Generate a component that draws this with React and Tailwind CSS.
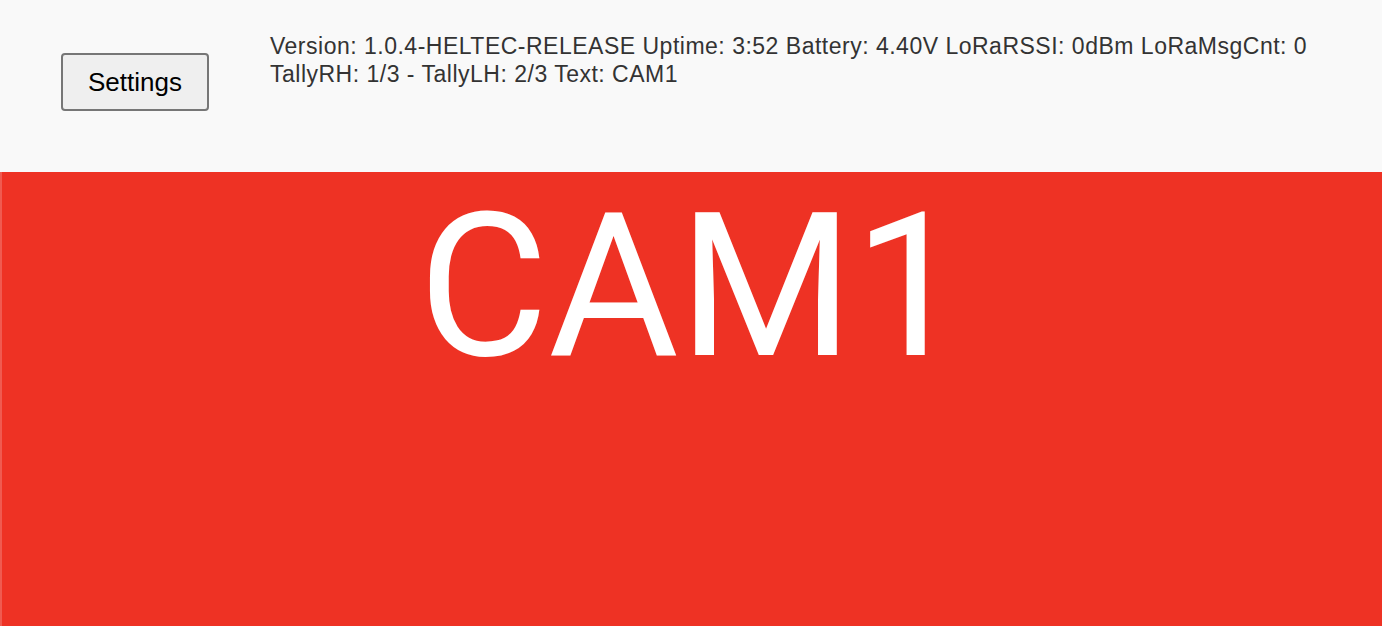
export default function App() {
  return (
    <div className="w-[1382px] h-[626px] flex flex-col bg-[#f9f9f9] overflow-hidden" style={{ fontFamily: '"Liberation Sans", Arial, sans-serif' }}>
      <div className="h-[172px] flex items-start shrink-0">
        <button className="mt-[53px] ml-[61px] w-[148px] h-[58px] border-2 border-[#767676] rounded-[4px] bg-[#efefef] text-[26px] text-black leading-none">
          Settings
        </button>
        <div className="ml-[61px] mt-[32px] text-[23px] tracking-[0.5px] leading-[28px] text-[#333333]">
          <div>Version: 1.0.4-HELTEC-RELEASE Uptime: 3:52 Battery: 4.40V LoRaRSSI: 0dBm LoRaMsgCnt: 0</div>
          <div>TallyRH: 1/3 - TallyLH: 2/3 Text: CAM1</div>
        </div>
      </div>
      <div className="flex-1 bg-[#ee3224] border-l-2 border-[#f05a50] text-white text-center text-[200px] leading-[230px]" style={{ fontFamily: 'Roboto, "Liberation Sans", sans-serif' }}>
        CAM1
      </div>
    </div>
  );
}
